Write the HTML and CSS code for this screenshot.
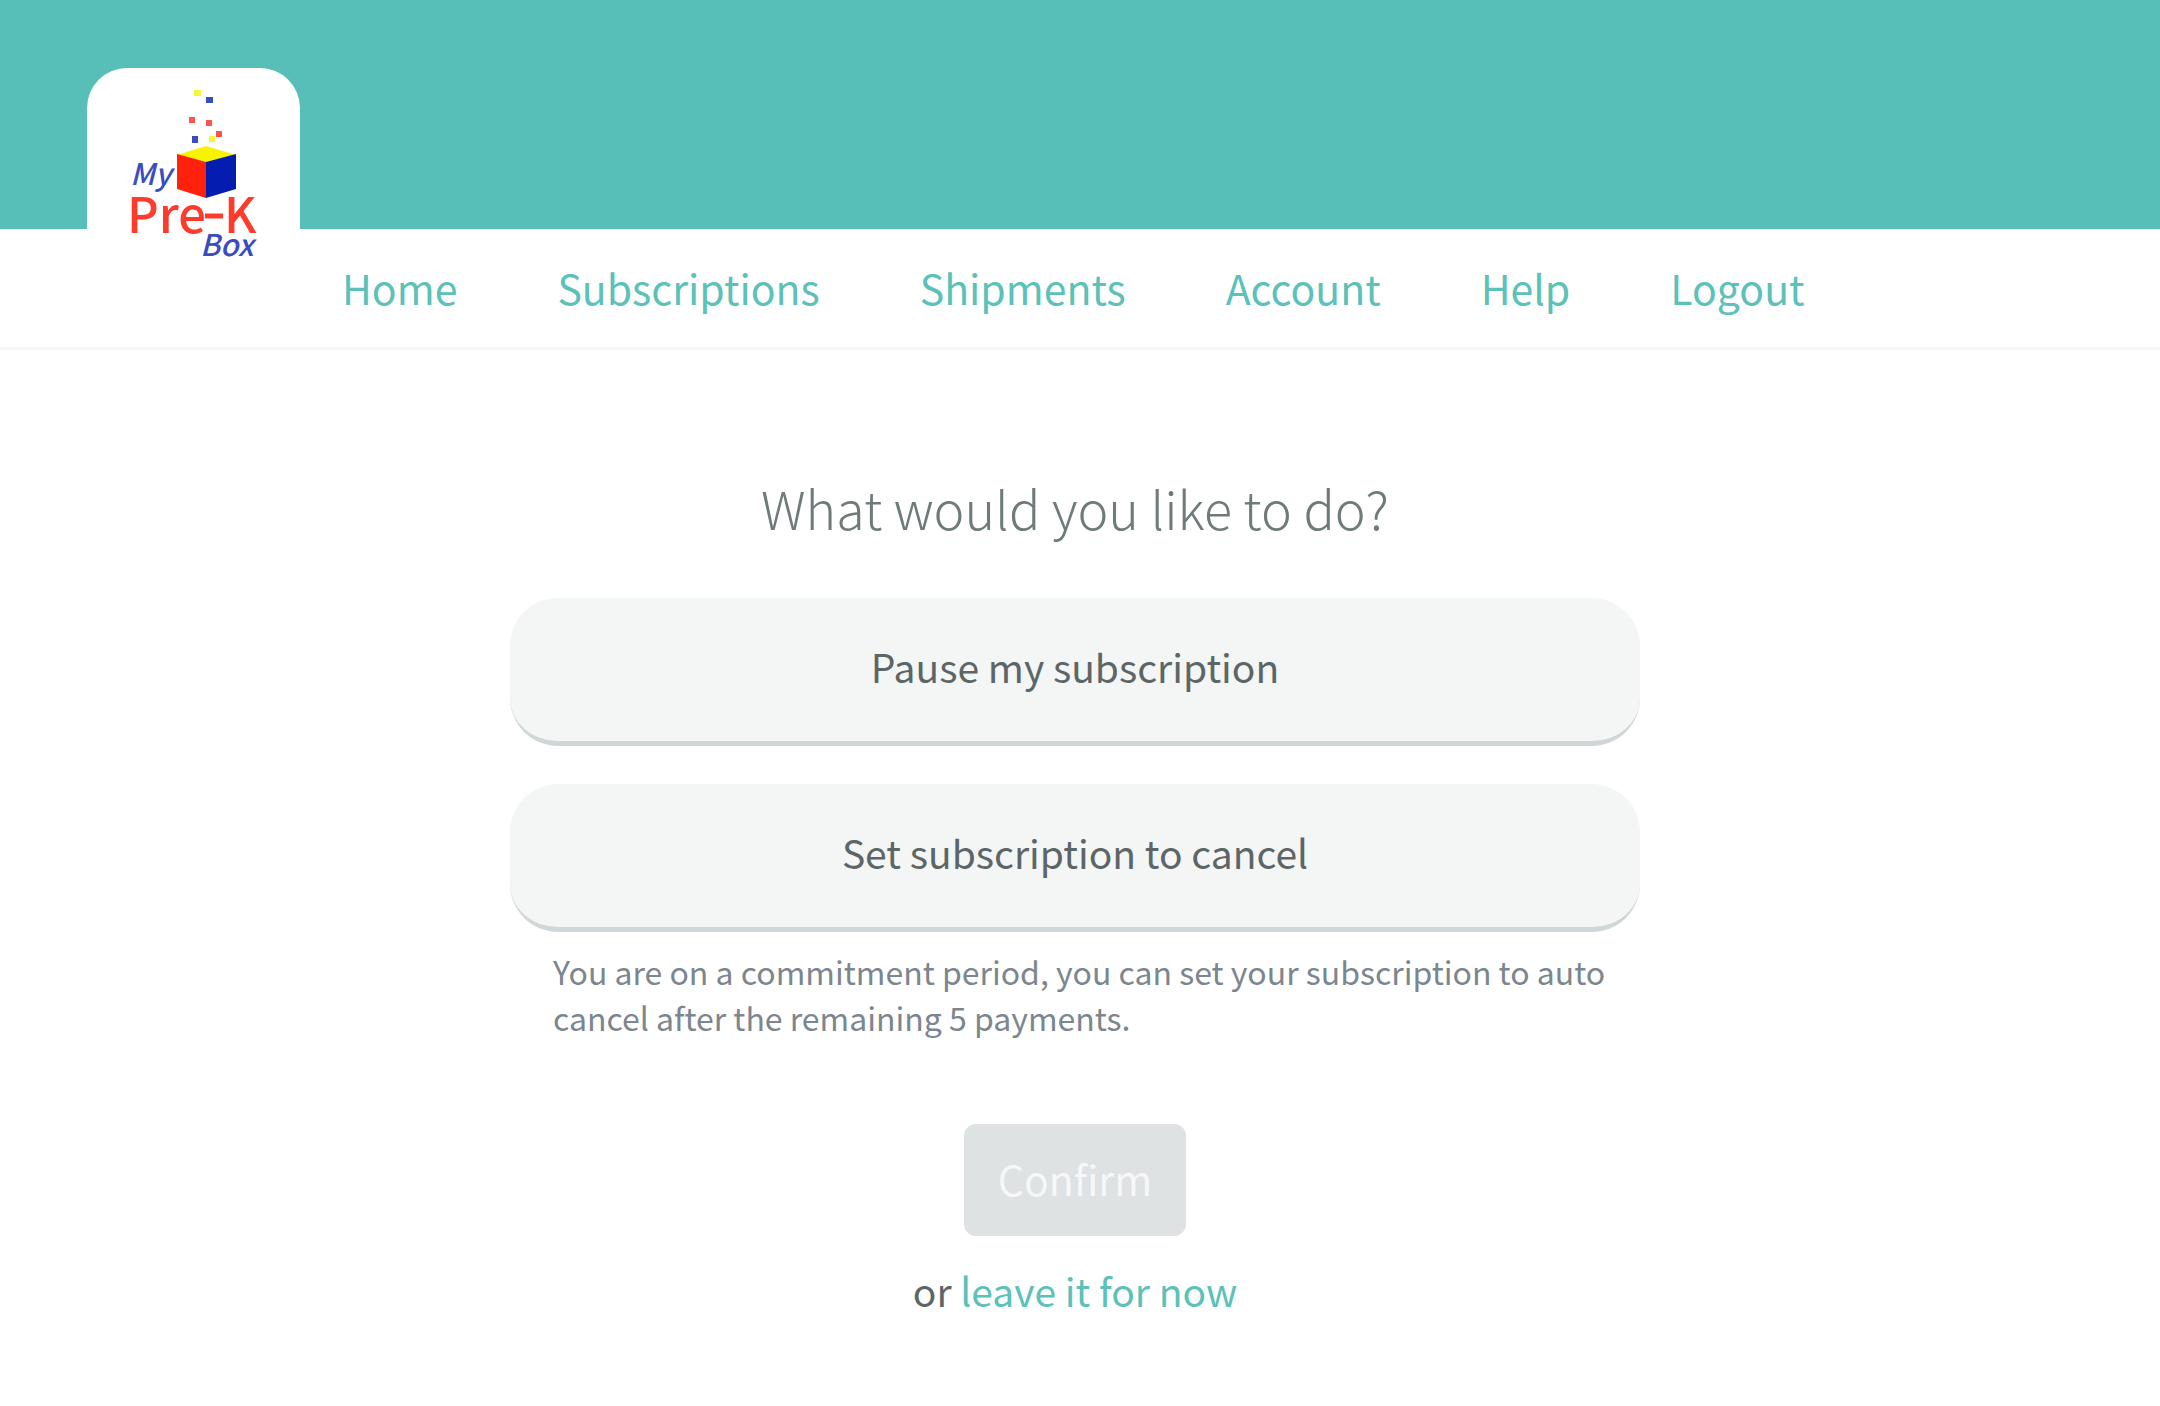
FILE: index.html
```
<!DOCTYPE html>
<html lang="en">
<head>
    <meta charset="UTF-8">
    <meta name="viewport" content="width=device-width, initial-scale=1.0">
    <title>My Pre-K Box - Subscription</title>
    <link rel="stylesheet" href="styles.css">
</head>
<body>
    <header class="banner">
        <a href="#" class="logo" aria-label="My Pre-K Box">
            <svg viewBox="0 0 213 202" xmlns="http://www.w3.org/2000/svg">
                <!-- confetti -->
                <rect x="107" y="22" width="7" height="6" fill="#f7f53a"/>
                <rect x="119" y="29" width="7" height="6" fill="#3a4cc0"/>
                <rect x="102" y="49" width="6" height="6" fill="#ff5548"/>
                <rect x="119" y="52" width="6" height="6" fill="#ff5548"/>
                <rect x="129" y="63" width="6" height="6" fill="#ff5548"/>
                <rect x="105" y="68" width="6" height="7" fill="#3a4cc0"/>
                <rect x="122" y="68" width="6" height="6" fill="#f7f53a"/>
                <!-- box -->
                <polygon points="90,87 119,78 149,87 119,94" fill="#f8f400"/>
                <polygon points="90,86 119,94 119,130 90,121" fill="#ff210c"/>
                <polygon points="119,94 149,86 149,121 119,130" fill="#041cb0"/>
                <text class="logo-script" x="43" y="117" font-size="30">My</text>
                <text class="logo-name" x="40" y="165" font-size="49">Pre</text>
                <path d="M118 148h18" stroke="#ff3b2b" stroke-width="5"/>
                <text class="logo-name" x="137" y="165" font-size="49">K</text>
                <text class="logo-script" x="113" y="188" font-size="30">Box</text>
            </svg>
        </a>
    </header>

    <nav class="menu">
        <a href="#">Home</a>
        <a href="#">Subscriptions</a>
        <a href="#">Shipments</a>
        <a href="#">Account</a>
        <a href="#">Help</a>
        <a href="#">Logout</a>
    </nav>

    <main class="content">
        <h1>What would you like to do?</h1>
        <button type="button" class="option">Pause my subscription</button>
        <button type="button" class="option">Set subscription to cancel</button>
        <p class="note">You are on a commitment period, you can set your subscription to auto cancel after the remaining 5 payments.</p>
        <button type="submit" class="confirm" disabled>Confirm</button>
        <p class="leave">or <a href="#">leave it for now</a></p>
    </main>
</body>
</html>
```
FILE: styles.css
```
* {
    box-sizing: border-box;
}
body {
    margin: 0;
    background: #fff;
    color: #5c6666;
    font-family: "Noto Sans CJK SC", "Noto Sans", sans-serif;
    font-size: 39px;
    line-height: 56px;
}
a {
    color: #5bc1b9;
    text-decoration: none;
}
button {
    font: inherit;
    border: 0;
}
.banner {
    position: relative;
    height: 229px;
    background: #57beb8;
}
.logo {
    position: absolute;
    top: 68px;
    left: 87px;
    width: 213px;
    background: #fff;
    border-radius: 40px 40px 0 0;
}
.logo svg {
    display: block;
    width: 100%;
}
.logo-script {
    fill: #3a4cc0;
    font-family: "Noto Sans CJK SC", sans-serif;
    font-style: italic;
    font-weight: 500;
}
.logo-name {
    fill: #ff3b2b;
    font-family: "Noto Sans CJK SC", sans-serif;
    font-weight: 500;
}
.menu {
    display: flex;
    gap: 100px;
    padding: 30px 0 32px 342px;
    border-bottom: 3px solid #f6f7f7;
    font-size: 41px;
}
.content {
    display: flex;
    flex-direction: column;
    align-items: center;
    width: 1140px;
    max-width: 100%;
    margin: 0 auto;
    padding: 120px 10px 0 0;
}
h1 {
    margin: 0 0 52px;
    font-size: 52px;
    font-weight: 300;
    line-height: 76px;
    color: #6f7b7b;
}
.option {
    width: 100%;
    height: 148px;
    margin-bottom: 38px;
    padding-bottom: 8px;
    border-bottom: 5px solid #d0d7d9;
    border-radius: 48px;
    background: #f4f6f6;
    color: #5c6666;
}
.note {
    margin: -22px 0 84px;
    padding: 0 24px 0 43px;
    font-size: 32px;
    line-height: 46px;
    color: #7c868e;
}
.confirm {
    height: 112px;
    padding: 0 34px 4px;
    border-radius: 12px;
    background: #dee2e3;
    color: #f6f7f8;
    font-size: 41px;
}
.leave {
    margin: 26px 0 0;
}
```
